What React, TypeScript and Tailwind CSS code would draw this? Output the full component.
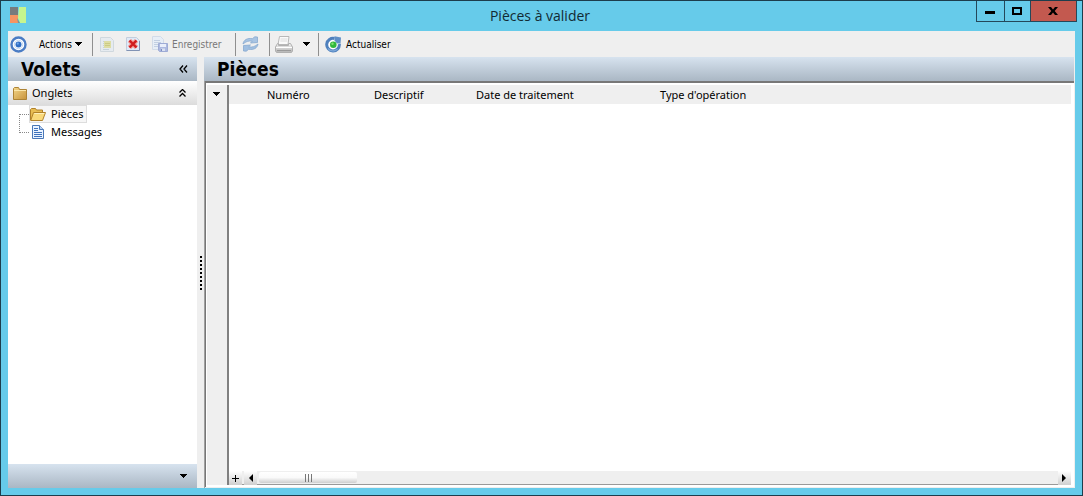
import type { ReactNode } from "react";

function Caret() {
  return (
    <svg width="8" height="4" viewBox="0 0 8 4" shapeRendering="crispEdges" aria-hidden="true">
      <path d="M0 0h8L4 4z" />
    </svg>
  );
}

function TargetIcon() {
  return (
    <svg width="17" height="17" viewBox="0 0 17 17" aria-hidden="true">
      <circle cx="8.5" cy="8.5" r="7" fill="#fff" stroke="#4a7cc4" strokeWidth="2.4" />
      <circle cx="8.5" cy="8.5" r="3" fill="#2f6fc6" />
      <circle cx="8.5" cy="8.5" r="4.2" fill="none" stroke="#c5dbf3" />
      <circle cx="7.8" cy="7.6" r="1.1" fill="#6fa5e6" />
    </svg>
  );
}

function NewIcon() {
  return (
    <svg width="14" height="16" viewBox="0 0 14 16" aria-hidden="true">
      <path d="M.5 1.500h10l3 3v11H.5z" fill="#e6ebf0" stroke="#d0d8de" />
      <path d="M3 5.500h8M3 7.500h8M3 9.500h8M3 11.500h8M3 13.500h6" stroke="#c6d2d8" />
      <path d="M4 5h7v7H4z" fill="#dddda4" />
      <path d="M5 7.500h5M5 9.500h5" stroke="#cccb82" />
    </svg>
  );
}

function DeleteIcon() {
  return (
    <svg width="14" height="16" viewBox="0 0 14 16" aria-hidden="true">
      <path d="M.5 1.500h10l3 3v10H.5z" fill="#dfe9f7" stroke="#c3cedd" />
      <path d="M.5 14.500h13V5" fill="none" stroke="#8193b4" />
      <path d="M3.500 4.500l7 7m0-7l-7 7" stroke="#f3948c" strokeWidth="4.500" />
      <path d="M3.500 4.500l7 7m0-7l-7 7" stroke="#cf1c20" strokeWidth="2.400" />
    </svg>
  );
}

function SaveIcon() {
  return (
    <svg width="16" height="16" viewBox="0 0 16 16" aria-hidden="true">
      <path d="M.5.500h8l3 3v10H.5z" fill="#e7eef7" stroke="#d2dbe8" />
      <path d="M2 4.500h6M2 6.500h7M2 8.500h5M2 10.500h4" stroke="#c2cfe2" />
      <path d="M6.500 7.500h9v8h-8l-1-1z" fill="#adb9e0" stroke="#9eabd5" />
      <path d="M8 8h6v3H8z" fill="#e9eefa" />
      <path d="M9 12.500h4V15H9z" fill="#dbe2f2" />
      <path d="M9.500 13v2" stroke="#7c8cc0" />
    </svg>
  );
}

function SyncIcon() {
  return (
    <svg width="17" height="16" viewBox="0 0 17 16" aria-hidden="true">
      <path d="M1 8C1.500 4 5.500 1.600 10.500 2.800L12.500.800 15.500 1v5.500L8.500 7 10.300 5.200C6.500 4.500 4 5.500 1 8z" fill="#a8c4e3" stroke="#86a8cf" strokeWidth=".8" />
      <path d="M16 8C15.500 12 11.500 14.400 6.500 13.200L4.500 15.200 1.500 15V9.500L8.500 9 6.700 10.800C10.500 11.500 13 10.500 16 8z" fill="#a0bfe1" stroke="#86a8cf" strokeWidth=".8" />
    </svg>
  );
}

function PrinterIcon() {
  return (
    <svg width="18" height="17" viewBox="0 0 18 17" aria-hidden="true">
      <defs>
        <linearGradient id="printer" x2="0" y2="1">
          <stop stopColor="#f2f2f2" />
          <stop offset="1" stopColor="#b4b4b4" />
        </linearGradient>
      </defs>
      <path d="M4.500.500h9.500l-1 8H3z" fill="#fafafa" stroke="#b8b8b8" />
      <path d="M5.500 3h7M5.300 5h7" stroke="#dcdcdc" />
      <path d="M2.500 7.500h1v2h10v-2h2l2 3.500v4l-1 1.500H1.500L.5 15v-4z" fill="url(#printer)" stroke="#b0b0b0" />
      <path d="M1 11.500h16" stroke="#fff" />
      <path d="M2 14.500h14" stroke="#999999" />
    </svg>
  );
}

function ReloadIcon() {
  return (
    <svg width="17" height="17" viewBox="0 0 17 17" aria-hidden="true">
      <circle cx="8" cy="8.700" r="6" fill="#fff" />
      <path d="M9.500 2.500A6.300 6.300 0 1 0 14.300 8" fill="none" stroke="#4f80bd" strokeWidth="3" />
      <path d="M3 12.500A6.300 6.300 0 0 0 12.500 13" fill="none" stroke="#7ba6d8" strokeWidth="1.400" />
      <path d="M9.500 4.500V.200L16 1.500 15.500 7.500H12z" fill="#5f8fc6" />
      <circle cx="8.300" cy="8.700" r="3.300" fill="#31b83c" />
      <circle cx="7.500" cy="7.700" r="1.200" fill="#83df72" />
    </svg>
  );
}

function AppIcon() {
  return (
    <svg width="17" height="17" viewBox="0 0 17 17" aria-hidden="true">
      <path d="M0 0h8v8H0z" fill="#777b7d" />
      <path d="M0 8h8v8H0z" fill="#f69462" />
      <path d="M9 0h7v16h-6L8 11z" fill="#c6f58e" />
      <path d="M7 11l3 5H8z" fill="#7f9394" />
    </svg>
  );
}

function FolderIcon() {
  return (
    <svg width="14" height="13" viewBox="0 0 14 13" aria-hidden="true">
      <defs>
        <linearGradient id="folder" x2="1" y2="1">
          <stop stopColor="#f3d68a" />
          <stop offset="1" stopColor="#c8933a" />
        </linearGradient>
      </defs>
      <path d="M.5 1.500l1-1h4l1 2h7v10H.5z" fill="url(#folder)" stroke="#ad8335" />
      <path d="M1 3.500h12" stroke="#fbe7aa" />
    </svg>
  );
}

function OpenFolderIcon() {
  return (
    <svg width="16" height="13" viewBox="0 0 16 13" aria-hidden="true">
      <path d="M.5 12V1.500l1-1h4l1 1.500h6v3" fill="#e8bd53" stroke="#b0812a" />
      <path d="M3.500 4.500h12l-3 8H.7z" fill="#f9d97a" stroke="#b0812a" />
      <path d="M4.300 5.500h10" stroke="#fff0ba" />
    </svg>
  );
}

function DocumentIcon() {
  return (
    <svg width="12" height="14" viewBox="0 0 12 14" aria-hidden="true">
      <path d="M.5.500h7l4 4v9H.5z" fill="#eaf3ff" stroke="#4a78b8" />
      <path d="M7.500.500v4h4" fill="#b8d0ef" stroke="#4a78b8" />
      <path d="M2 3.500h4M2 5.500h4M2 7.500h8M2 9.500h8M2 11.500h8" stroke="#3e72bd" />
    </svg>
  );
}

function Separator() {
  return <span className="h-[23px] w-px shrink-0 bg-[#8f8f8f]" />;
}

function ToolButton({ label, disabled, className, children }: { label?: string; disabled?: boolean; className: string; children: ReactNode }) {
  return (
    <button type="button" aria-label={label} disabled={disabled} className={`flex h-6 shrink-0 items-center whitespace-nowrap ${className}`}>
      {children}
    </button>
  );
}

function Toolbar() {
  return (
    <div role="toolbar" className="flex h-[26px] shrink-0 items-center bg-[#efefef] pl-[2px] font-[Tahoma,'DejaVu_Sans_Condensed','DejaVu_Sans',sans-serif] text-[10px]">
      <ToolButton label="Cible" className="w-[29px]"><TargetIcon /></ToolButton>
      <ToolButton className="w-[53px] gap-[2px]">Actions<Caret /></ToolButton>
      <Separator />
      <ToolButton label="Nouveau" disabled className="w-[26px] pl-[7px]"><NewIcon /></ToolButton>
      <ToolButton label="Supprimer" className="w-[26px] pl-[7px]"><DeleteIcon /></ToolButton>
      <ToolButton disabled className="w-[90px] gap-1 pl-[7px] text-[#777777]"><SaveIcon />Enregistrer</ToolButton>
      <Separator />
      <ToolButton label="Synchroniser" disabled className="w-[33px] pl-[6px]"><SyncIcon /></ToolButton>
      <Separator />
      <ToolButton label="Imprimer" className="w-[29px] pl-[5px]"><PrinterIcon /></ToolButton>
      <ToolButton label="Options d'impression" className="w-[19px] pl-[3px]"><Caret /></ToolButton>
      <Separator />
      <ToolButton className="gap-1 pl-[6px]"><ReloadIcon />Actualiser</ToolButton>
    </div>
  );
}

function SidePanel() {
  return (
    <aside className="flex w-[189px] shrink-0 flex-col bg-white">
      <div className="flex h-6 shrink-0 items-center justify-between bg-linear-to-b from-[#d7e3ef] to-[#aab7c4] pr-[9px] pl-[13px]">
        <h2 className="font-[Tahoma,'DejaVu_Sans_Condensed','DejaVu_Sans',sans-serif] text-[19px] leading-6 font-bold">Volets</h2>
        <button type="button" aria-label="Réduire">
          <svg width="9" height="8" viewBox="0 0 9 8" fill="none" stroke="#000" strokeWidth="1.300" aria-hidden="true">
            <path d="M4 .500L1 4l3 3.500M8 .500L5 4l3 3.500" />
          </svg>
        </button>
      </div>
      <div className="flex h-6 shrink-0 items-center bg-linear-to-b from-white to-[#dcdcdc] pr-[11px] pl-[5px] text-[11px]">
        <FolderIcon />
        <span className="ml-[5px] flex-1">Onglets</span>
        <button type="button" aria-label="Replier">
          <svg width="7" height="8" viewBox="0 0 7 8" fill="none" stroke="#000" strokeWidth="1.300" aria-hidden="true">
            <path d="M.5 3.500l3-3 3 3M.5 7.500l3-3 3 3" />
          </svg>
        </button>
      </div>
      <div className="flex flex-1 items-start pl-[11px] text-[11px]">
        <div className="mt-[9px] h-[19px] w-[10px] shrink-0 border-y border-l border-dotted border-[#888888]" />
        <ul>
          <li>
            <a href="#pieces" className="flex h-[18px] w-fit items-center gap-[5px] border border-[#dddddd] bg-[#f6f6f6] pr-[3px]">
              <OpenFolderIcon />Pièces
            </a>
          </li>
          <li>
            <a href="#messages" className="flex h-[18px] w-fit items-center gap-[7px] pl-[3px]">
              <DocumentIcon />Messages
            </a>
          </li>
        </ul>
      </div>
      <div className="flex h-6 shrink-0 items-center justify-end bg-linear-to-b from-[#d7e3ef] to-[#aab7c4] pr-[10px]">
        <button type="button" aria-label="Configurer"><Caret /></button>
      </div>
    </aside>
  );
}

function Splitter() {
  return (
    <div className="flex w-[7px] shrink-0 flex-col items-start justify-center gap-[2px] bg-[#efefef] pl-[3px]">
      {Array.from({ length: 9 }, (_, i) => (
        <span key={i} className="size-[2px] bg-black" />
      ))}
    </div>
  );
}

function ScrollRow() {
  const end = "flex h-[14px] w-[13px] shrink-0 items-center justify-center bg-linear-to-b from-white to-[#cfcfcf]";
  return (
    <div className="flex h-[14px] shrink-0 bg-[#efefef]">
      <button type="button" aria-label="Ajouter" className={end}>
        <svg width="7" height="7" shapeRendering="crispEdges" aria-hidden="true"><path d="M3 0h1v3h3v1H4v3H3V4H0V3h3z" /></svg>
      </button>
      <div className="flex min-w-0 flex-1 border-b border-[#999999] pl-[2px]">
        <button type="button" aria-label="Défiler à gauche" className={end}>
          <svg width="5" height="8" aria-hidden="true"><path d="M5 0v8L1 4z" /></svg>
        </button>
        <div className="min-w-0 flex-1 pt-px pl-[2px]">
          <div className="flex h-[11px] w-[98px] items-center justify-center gap-[2px] rounded-[2px] bg-linear-to-b from-white via-[#fafafa] to-[#cfcfcf]">
            <span className="h-2 w-px bg-[#777777]" />
            <span className="h-2 w-px bg-[#777777]" />
            <span className="h-2 w-px bg-[#777777]" />
          </div>
        </div>
        <button type="button" aria-label="Défiler à droite" className={end}>
          <svg width="5" height="8" aria-hidden="true"><path d="M0 0v8l4-4z" /></svg>
        </button>
      </div>
    </div>
  );
}

function MainPanel() {
  return (
    <main className="mr-px flex min-w-0 flex-1 flex-col">
      <div className="flex h-6 shrink-0 items-center bg-linear-to-b from-[#d7e3ef] to-[#aab7c4] pl-[13px]">
        <h2 className="font-[Tahoma,'DejaVu_Sans_Condensed','DejaVu_Sans',sans-serif] text-[19px] leading-6 font-bold">Pièces</h2>
      </div>
      <div className="flex flex-1 border-l border-[#a0a0a0]">
        <div className="mb-px flex min-w-0 flex-1 border-t-2 border-l border-[#777777] bg-white pt-[2px] pr-[3px] pb-[2px] pl-px">
          <div className="flex w-[22px] shrink-0 flex-col border-r-2 border-[#808080] bg-[#efefef] pt-[7px] pl-[5px]">
            <button type="button" aria-label="Menu des lignes"><Caret /></button>
          </div>
          <div className="flex min-w-0 flex-1 flex-col">
            <div className="flex-1">
              <table className="w-full table-fixed border-collapse text-left text-[11px]">
                <thead>
                  <tr className="h-[18px] bg-[#efefef]">
                    <td className="w-[38px] p-0" />
                    <th scope="col" className="w-[107px] p-0 pt-[2px] font-normal">Numéro</th>
                    <th scope="col" className="w-[102px] p-0 pt-[2px] font-normal">Descriptif</th>
                    <th scope="col" className="w-[184px] p-0 pt-[2px] font-normal">Date de traitement</th>
                    <th scope="col" className="p-0 pt-[2px] font-normal">Type d'opération</th>
                  </tr>
                </thead>
              </table>
            </div>
            <ScrollRow />
          </div>
        </div>
      </div>
    </main>
  );
}

export default function App() {
  return (
    <div className="flex h-screen flex-col border border-[#1d3d4c] bg-[#66cbea] px-[7px] pb-[7px] font-['Noto_Sans',sans-serif] text-black">
      <header className="flex h-[30px] shrink-0 items-start justify-between">
        <div className="w-[96px] pt-[6px] pl-[2px]"><AppIcon /></div>
        <h1 className="pt-[5px] font-['Open_Sans',sans-serif] text-[14px] leading-5 text-[#122a33]">Pièces à valider</h1>
        <div className="-mr-[2px] flex h-[21px] border-x border-b border-[#24485a]">
          <button type="button" aria-label="Réduire" className="flex w-[27px] items-center justify-center pt-[3px]">
            <span className="h-[3px] w-[10px] bg-black" />
          </button>
          <button type="button" aria-label="Agrandir" className="flex w-[26px] items-center justify-center border-l border-[#24485a]">
            <span className="h-2 w-[10px] border-2 border-black" />
          </button>
          <button type="button" aria-label="Fermer" className="flex w-[46px] items-center justify-center border-l border-[#24485a] bg-[#c3594f]">
            <svg width="10" height="8" viewBox="0 0 10 8" aria-hidden="true">
              <path d="M0 0h3l2 2.500L7 0h3L6.700 4 10 8H7L5 5.500 3 8H0l3.300-4z" />
            </svg>
          </button>
        </div>
      </header>
      <div className="flex min-h-0 flex-1 flex-col bg-[#efefef]">
        <Toolbar />
        <div className="flex min-h-0 flex-1">
          <SidePanel />
          <Splitter />
          <MainPanel />
        </div>
      </div>
    </div>
  );
}
